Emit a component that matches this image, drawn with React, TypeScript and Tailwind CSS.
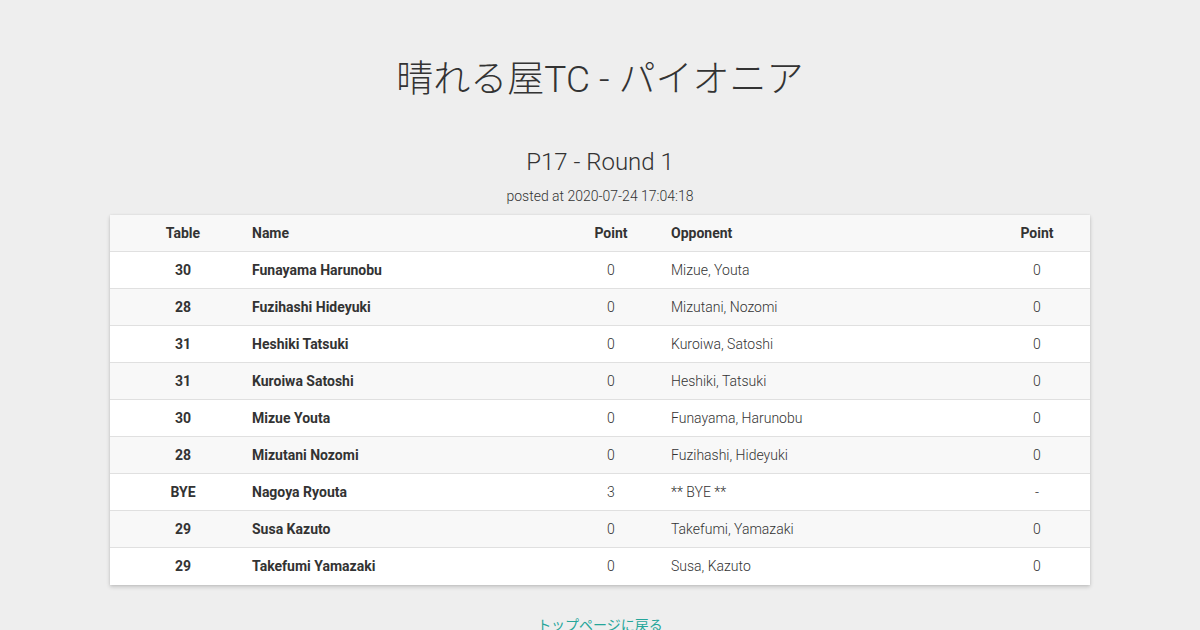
import React from "react";

const rows = [
  ["30", "Funayama Harunobu", "0", "Mizue, Youta", "0"],
  ["28", "Fuzihashi Hideyuki", "0", "Mizutani, Nozomi", "0"],
  ["31", "Heshiki Tatsuki", "0", "Kuroiwa, Satoshi", "0"],
  ["31", "Kuroiwa Satoshi", "0", "Heshiki, Tatsuki", "0"],
  ["30", "Mizue Youta", "0", "Funayama, Harunobu", "0"],
  ["28", "Mizutani Nozomi", "0", "Fuzihashi, Hideyuki", "0"],
  ["BYE", "Nagoya Ryouta", "3", "** BYE **", "-"],
  ["29", "Susa Kazuto", "0", "Takefumi, Yamazaki", "0"],
  ["29", "Takefumi Yamazaki", "0", "Susa, Kazuto", "0"],
];

export default function App() {
  return (
    <div
      className="w-[1200px] h-[630px] overflow-hidden bg-[#eeeeee] text-[#333333] flex flex-col items-center"
      style={{ fontFamily: 'Roboto, "Noto Sans CJK JP", sans-serif' }}
    >
      <h1 className="mt-[55px] h-[50px] leading-[50px] text-[37px] font-light text-[#333]">
        晴れる屋TC - パイオニア
      </h1>
      <h2 className="mt-[43px] h-[28px] leading-[28px] text-[24px] font-light text-[#333]">
        P17 - Round 1
      </h2>
      <div className="mt-[10px] h-[20px] leading-[20px] text-[14px] font-light text-[#333]">
        posted at 2020-07-24 17:04:18
      </div>
      <div className="mt-[9px] w-[980px] bg-white shadow-[0_2px_4px_rgba(0,0,0,0.18),0_0_2px_rgba(0,0,0,0.08)] text-[14px]">
        <div className="flex h-[37px] items-center bg-[#f8f8f8] border-b border-[#e0e0e0] font-bold text-[#333]">
          <div className="w-[130px] pl-4 text-center">Table</div>
          <div className="w-[331px] pl-3">Name</div>
          <div className="w-[80px] text-center">Point</div>
          <div className="w-[346px] pl-5">Opponent</div>
          <div className="w-[80px] text-center">Point</div>
        </div>
        {rows.map((r, i) => (
          <div
            key={i}
            className={`flex h-[37px] items-center ${i < rows.length - 1 ? "border-b border-[#e0e0e0]" : ""} ${i % 2 === 1 ? "bg-[#f8f8f8]" : "bg-white"}`}
          >
            <div className="w-[130px] pl-4 text-center font-bold">{r[0]}</div>
            <div className="w-[331px] pl-3 font-bold">{r[1]}</div>
            <div className="w-[80px] text-center font-light">{r[2]}</div>
            <div className="w-[346px] pl-5 font-light">{r[3]}</div>
            <div className="w-[80px] text-center font-light">{r[4]}</div>
          </div>
        ))}
      </div>
      <a className="mt-[30px] text-[14px] font-normal text-[#26a69a] leading-[20px]">
        トップページに戻る
      </a>
    </div>
  );
}
